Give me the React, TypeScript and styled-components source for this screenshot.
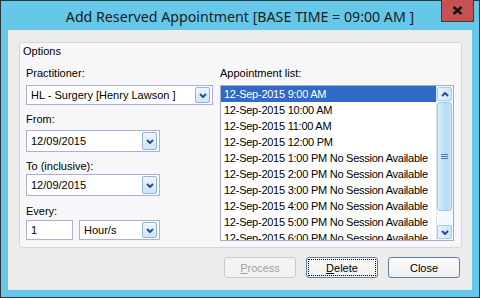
import React from 'react'
import styled, { createGlobalStyle } from 'styled-components'

const GlobalStyle = createGlobalStyle`
  html, body {
    margin: 0;
    padding: 0;
  }
  body {
    width: 480px;
    height: 298px;
    overflow: hidden;
    font-family: "Liberation Sans", Arial, sans-serif;
    font-size: 11px;
  }
  * {
    box-sizing: border-box;
  }
`

const Window = styled.div`
  width: 480px;
  height: 298px;
  border: 1px solid #2f3336;
  background: #65c8e9;
  display: flex;
  flex-direction: column;
  padding: 0 7px 7px;
`

const TitleBar = styled.div`
  height: 29px;
  flex-shrink: 0;
  display: grid;
  grid-template-columns: 1fr auto 1fr;
  align-items: start;
`

const Title = styled.div`
  grid-column: 2;
  font-family: "Noto Sans", "Open Sans", sans-serif;
  font-size: 14.2px;
  line-height: 20px;
  padding-top: 6px;
  color: #1b1b1b;
  white-space: nowrap;
`

const CloseBox = styled.div`
  grid-column: 3;
  justify-self: end;
  width: 33px;
  height: 22px;
  margin-top: -1px;
  margin-right: -2px;
  background: #c75050;
  border: 1px solid #3b3b3b;
  border-top: none;
  display: flex;
  align-items: center;
  justify-content: center;
`

const Client = styled.div`
  flex: 1;
  background: #ececec;
  padding: 12px 0 0 11px;
  display: flex;
  flex-direction: column;
`

const GroupBox = styled.div`
  width: 443px;
  height: 206px;
  border: 1px solid #d3d8e0;
  border-radius: 3px;
  background: #f7f7fa;
  padding: 1px 0 0 6px;
`

const GroupTitle = styled.div`
  line-height: 14px;
  margin-left: -3px;
  color: #000;
`

const Columns = styled.div`
  display: grid;
  grid-template-columns: 187px 234px;
  column-gap: 7px;
  margin-top: 8px;
`

const Column = styled.div`
  display: flex;
  flex-direction: column;
`

const Label = styled.div<{ $top?: number; $bottom?: number }>`
  line-height: 14px;
  margin-top: ${({ $top }) => $top ?? 0}px;
  margin-bottom: ${({ $bottom }) => $bottom ?? 5}px;
  color: #000;
`

const Row = styled.div`
  display: flex;
  gap: 6px;
`

const Field = styled.div<{ $width: number; $height: number }>`
  width: ${({ $width }) => $width}px;
  height: ${({ $height }) => $height}px;
  border: 1px solid #abb0d4;
  background: #fff;
  display: flex;
  align-items: center;
  padding: 0 2px 0 4px;
  color: #000;
`

const FieldText = styled.span`
  flex: 1;
  white-space: nowrap;
  overflow: hidden;
`

const DropButton = styled.div<{ $height: number }>`
  width: 15px;
  height: ${({ $height }) => $height}px;
  border: 1px solid #8fb5dc;
  border-radius: 2px;
  background: linear-gradient(#eef6fd, #cfe5f8);
  display: flex;
  align-items: center;
  justify-content: center;
`

const ListBox = styled.div`
  height: 156px;
  border: 1px solid #a3abd0;
  background: #fff;
  display: flex;
  overflow: hidden;
`

const Rows = styled.div`
  flex: 1;
  overflow: hidden;
`

const Item = styled.div<{ $selected?: boolean }>`
  height: 16px;
  line-height: 16px;
  padding-left: 3px;
  white-space: nowrap;
  letter-spacing: -0.25px;
  background: ${({ $selected }) => ($selected ? '#3169c6' : 'transparent')};
  color: ${({ $selected }) => ($selected ? '#fff' : '#000')};
`

const ScrollBar = styled.div`
  width: 17px;
  flex-shrink: 0;
  border-left: 1px solid #d6e6f4;
  background: #f5f9fd;
  display: flex;
  flex-direction: column;
  padding: 1px 1px 1px 0;
  gap: 1px;
`

const ScrollButton = styled.div`
  height: 14px;
  border: 1px solid #a9cbe9;
  border-radius: 2px;
  background: linear-gradient(90deg, #e8f3fc, #cde4f7);
  display: flex;
  align-items: center;
  justify-content: center;
`

const Thumb = styled.div`
  height: 109px;
  border: 1px solid #9ec6e8;
  border-radius: 3px;
  background: linear-gradient(90deg, #dbeefb, #b7dbf5 60%, #c8e3f8);
  display: flex;
  align-items: center;
  justify-content: center;
`

const Track = styled.div`
  flex: 1;
`

const ButtonRow = styled.div`
  display: flex;
  gap: 10px;
  margin: 9px 0 0 205px;
`

const Button = styled.div<{ $disabled?: boolean; $focused?: boolean }>`
  width: 72px;
  height: 21px;
  border-radius: 3px;
  border: 1px solid ${({ $disabled }) => ($disabled ? '#cbcbcb' : '#5f7fa6')};
  background: ${({ $disabled }) => ($disabled ? '#f3f3f3' : 'linear-gradient(#fbfbfb, #f0f0f0)')};
  color: ${({ $disabled }) => ($disabled ? '#a0a0a0' : '#000')};
  display: flex;
  align-items: center;
  justify-content: center;
  outline: ${({ $focused }) => ($focused ? '1px dotted #000' : 'none')};
  outline-offset: -3px;
`

const Chevron = ({ up = false }: { up?: boolean }) => (
  <svg width="8" height="5" viewBox="0 0 8 5">
    <path
      d={up ? 'M1 4 L4 1 L7 4' : 'M1 1 L4 4 L7 1'}
      fill="none"
      stroke="#23508f"
      strokeWidth="2"
    />
  </svg>
)

const Grip = () => (
  <svg width="7" height="5" viewBox="0 0 7 5">
    <path d="M0 0.5 H7 M0 2.5 H7 M0 4.5 H7" stroke="#4a7fb6" strokeWidth="1" />
  </svg>
)

const Combo = ({ value, width, height }: { value: string; width: number; height: number }) => (
  <Field $width={width} $height={height}>
    <FieldText>{value}</FieldText>
    <DropButton $height={height - 4}>
      <Chevron />
    </DropButton>
  </Field>
)

const times = [
  '9:00 AM',
  '10:00 AM',
  '11:00 AM',
  '12:00 PM',
  '1:00 PM No Session Available',
  '2:00 PM No Session Available',
  '3:00 PM No Session Available',
  '4:00 PM No Session Available',
  '5:00 PM No Session Available',
  '6:00 PM No Session Available',
]

export default function App() {
  return (
    <>
      <GlobalStyle />
      <Window>
        <TitleBar>
          <Title>Add Reserved Appointment [BASE TIME = 09:00 AM ]</Title>
          <CloseBox>
            <svg width="11" height="9" viewBox="0 0 11 9">
              <path d="M1.5 1 L9.5 8 M9.5 1 L1.5 8" stroke="#111" strokeWidth="2.4" />
            </svg>
          </CloseBox>
        </TitleBar>
        <Client>
          <GroupBox>
            <GroupTitle>Options</GroupTitle>
            <Columns>
              <Column>
                <Label>Practitioner:</Label>
                <Combo value="HL - Surgery [Henry Lawson ]" width={187} height={20} />
                <Label $top={7} $bottom={4}>From:</Label>
                <Combo value="12/09/2015" width={134} height={22} />
                <Label $top={7} $bottom={1}>To (inclusive):</Label>
                <Combo value="12/09/2015" width={134} height={22} />
                <Label $top={8} $bottom={2}>Every:</Label>
                <Row>
                  <Field $width={47} $height={20}>
                    <FieldText>1</FieldText>
                  </Field>
                  <Combo value="Hour/s" width={81} height={20} />
                </Row>
              </Column>
              <Column>
                <Label>Appointment list:</Label>
                <ListBox>
                  <Rows>
                    {times.map((t, i) => (
                      <Item key={t} $selected={i === 0}>
                        12-Sep-2015 {t}
                      </Item>
                    ))}
                  </Rows>
                  <ScrollBar>
                    <ScrollButton>
                      <Chevron up />
                    </ScrollButton>
                    <Thumb>
                      <Grip />
                    </Thumb>
                    <Track />
                    <ScrollButton>
                      <Chevron />
                    </ScrollButton>
                  </ScrollBar>
                </ListBox>
              </Column>
            </Columns>
          </GroupBox>
          <ButtonRow>
            <Button $disabled>
              <span><u>P</u>rocess</span>
            </Button>
            <Button $focused>
              <span><u>D</u>elete</span>
            </Button>
            <Button>Close</Button>
          </ButtonRow>
        </Client>
      </Window>
    </>
  )
}
